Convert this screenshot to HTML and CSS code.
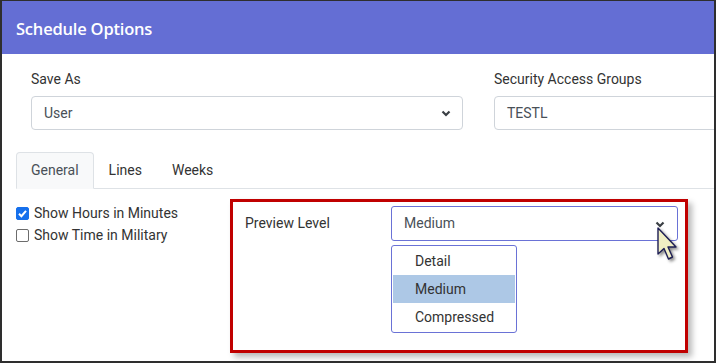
FILE: index.html
```html
<!DOCTYPE html>
<html>
<head>
    <link rel="stylesheet" href="styles.css">
</head>
<body>
    <div class="window">
        <div class="header"><h1>Schedule Options</h1></div>

        <div class="content">
            <div class="fields">
                <div class="field">
                    <label>Save As</label>
                    <div class="select">User
                        <svg class="chev" width="10" height="7" viewBox="0 0 10 7"><path d="M1.5 1.5 L5 5 L8.5 1.5" fill="none" stroke="#3a3f44" stroke-width="2.2"/></svg>
                    </div>
                </div>
                <div class="field">
                    <label>Security Access Groups</label>
                    <div class="select">TESTL</div>
                </div>
            </div>

            <ul class="tabs">
                <li class="active">General</li>
                <li>Lines</li>
                <li>Weeks</li>
            </ul>

            <div class="pane">
                <div class="checks">
                    <label class="check"><span class="box on"><svg width="13" height="13" viewBox="0 0 13 13"><path d="M3 6.8 L5.4 9.2 L10 3.8" fill="none" stroke="#fff" stroke-width="2"/></svg></span>Show Hours in Minutes</label>
                    <label class="check"><span class="box"></span>Show Time in Military</label>
                </div>

                <div class="callout">
                    <span class="level-label">Preview Level</span>
                    <div class="level">
                        <div class="select focus">Medium
                            <svg class="chev" width="10" height="7" viewBox="0 0 10 7"><path d="M1.5 1.5 L5 5 L8.5 1.5" fill="none" stroke="#3a3f44" stroke-width="2.2"/></svg>
                        </div>
                        <ul class="options">
                            <li>Detail</li>
                            <li class="picked">Medium</li>
                            <li>Compressed</li>
                        </ul>
                    </div>
                    <svg class="cursor" width="24" height="38" viewBox="0 0 24 38">
                        <path d="M2 2 L2 28 L8 22.5 L12.5 33 L16.5 31 L12 21 L20 21 Z" fill="#f1efc4" stroke="#1e1f55" stroke-width="1.4" stroke-linejoin="round"/>
                    </svg>
                </div>
            </div>
        </div>
    </div>
</body>
</html>
```

FILE: styles.css
```css
* { box-sizing: border-box; }
body { margin: 0; background: #fff; font-family: Roboto, "Liberation Sans", sans-serif; font-size: 14px; color: #333; }

.window { width: 716px; height: 363px; border: 2px solid #2e2e2e; border-top-width: 1px; overflow: hidden; background: #fff; }
.header { height: 53px; background: #646ed4; padding-left: 14px; display: flex; align-items: center; }
.header h1 { margin: 0; color: #fff; font-family: "Open Sans", sans-serif; font-size: 16.5px; font-weight: 600; letter-spacing: -0.2px; padding-top: 1px; }

.content { padding-top: 15px; }
.fields { display: flex; gap: 31px; padding-left: 29px; }
.field { width: 432px; flex-shrink: 0; }
.field label { display: block; line-height: 20px; margin-bottom: 7px; }

.select { position: relative; height: 34px; border: 1px solid #cfd4da; border-radius: 4px; padding: 0 12px; line-height: 32px; color: #495057; }
.select .chev { position: absolute; right: 11px; top: 13px; }
.select.focus { height: 35px; border-color: #6a72d6; line-height: 33px; border-radius: 3px; }
.select.focus .chev { top: 14px; right: 12px; }

.tabs { list-style: none; margin: 22px 0 0 14px; padding: 0; display: flex; border-bottom: 1px solid #dee2e6; height: 37px; }
.tabs li { padding: 0 14px; line-height: 35px; color: #333; border: 1px solid transparent; border-radius: 4px 4px 0 0; }
.tabs li.active { background: #f8f9fa; border-color: #dee2e6; border-bottom-color: #f8f9fa; color: #495057; height: 37px; }

.pane { display: flex; padding: 10px 0 0 14px; }
.checks { width: 214px; padding-top: 3px; }
.check { display: flex; align-items: center; line-height: 22px; color: #333; }
.box { width: 13px; height: 13px; border: 1px solid #6c6c6c; border-radius: 2px; margin-right: 5px; display: inline-flex; }
.box.on { background: #1670ec; border-color: #1670ec; }
.box svg { margin: -1px; }

.callout { position: relative; width: 458px; height: 154px; border: 3px solid #c00000; display: flex; padding: 4px 7px 0 12px; box-shadow: 4px 4px 6px rgba(0, 0, 0, 0.28); }
.level-label { width: 146px; line-height: 35px; color: #333; }
.level { flex: 1; }
.options { list-style: none; margin: 4px 0 0; padding: 1px; width: 126px; border: 1px solid #6a72d6; border-radius: 3px; }
.options li { line-height: 28px; padding-left: 22px; color: #333; }
.options li.picked { background: #adc8e6; }
.cursor { position: absolute; left: 423px; top: 24px; filter: drop-shadow(2px 2px 1.5px rgba(0, 0, 0, 0.45)); }
```
